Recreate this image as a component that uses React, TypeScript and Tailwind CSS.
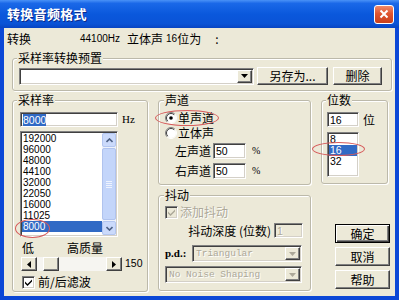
import React from "react";

const sunken =
  "border border-t-[#808080] border-l-[#808080] border-b-white border-r-white shadow-[inset_1px_1px_0_#404040,inset_-1px_-1px_0_#d4d0c8]";
const raised =
  "border border-t-white border-l-white border-b-[#404040] border-r-[#404040] shadow-[inset_-1px_-1px_0_#808080] bg-[#ece9d8]";
const group =
  "border border-[#bcb9aa] rounded-[3px] shadow-[inset_1px_1px_0_#fff,1px_1px_0_#fff]";
const legendCls = "px-[1px] leading-[14px] bg-[#ece9d8]";
const num = "font-['Liberation_Sans',sans-serif]";
const disabledText = "text-[#aca899] [text-shadow:1px_1px_0_#fff]";

function DownArrow({ color = "#000" }: { color?: string }) {
  return (
    <svg width="7" height="4" viewBox="0 0 7 4">
      <path d="M0 0h7L3.5 4z" fill={color} />
    </svg>
  );
}

function Combo({ cls, text, disabled }: { cls: string; text: string; disabled?: boolean }) {
  return (
    <div
      className={`${cls} h-[17px] flex items-stretch p-[1px] ${sunken} ${
        disabled ? "bg-[#ece9d8]" : "bg-white"
      }`}
    >
      <div
        className={`flex-1 pl-[2px] overflow-hidden whitespace-nowrap font-['Liberation_Mono',monospace] text-[9.5px] leading-[13px] ${
          disabled ? disabledText : ""
        }`}
      >
        {text}
      </div>
      <div className={`w-[15px] flex items-center justify-center ${raised}`}>
        <DownArrow color={disabled ? "#aca899" : "#000"} />
      </div>
    </div>
  );
}

function Edit({
  cls,
  text,
  disabled,
  selected,
}: {
  cls: string;
  text: string;
  disabled?: boolean;
  selected?: boolean;
}) {
  return (
    <div
      className={`${cls} ${sunken} ${
        disabled ? "bg-[#ece9d8]" : "bg-white"
      } px-[2px] flex items-center ${num} text-[10.5px] leading-[12px]`}
    >
      <span className={selected ? "bg-[#316ac5] text-white" : disabled ? disabledText : ""}>{text}</span>
    </div>
  );
}

function Radio({ checked }: { checked?: boolean }) {
  return (
    <svg width="12" height="12" viewBox="0 0 12 12">
      <circle cx="6" cy="6" r="5" fill="#fff" />
      <path d="M2.11 9.89A5.5 5.5 0 0 1 9.89 2.11" stroke="#808080" fill="none" />
      <path d="M9.89 2.11A5.5 5.5 0 0 1 2.11 9.89" stroke="#fff" fill="none" />
      <path d="M2.8 9.2A4.5 4.5 0 0 1 9.2 2.8" stroke="#404040" fill="none" />
      {checked && <circle cx="6" cy="6" r="1.8" fill="#000" />}
    </svg>
  );
}

function Check({ disabled }: { disabled?: boolean }) {
  return (
    <div
      className={`w-[13px] h-[13px] shrink-0 ${sunken} ${
        disabled ? "bg-[#ece9d8]" : "bg-white"
      } flex items-center justify-center`}
    >
      <svg width="7" height="7" viewBox="0 0 7 7">
        <path d="M0 2.5l2.5 2.5L7 0.5v2L2.5 7L0 4.5z" fill={disabled ? "#aca899" : "#000"} />
      </svg>
    </div>
  );
}

function Chevron({ up }: { up?: boolean }) {
  return (
    <svg width="7" height="5" viewBox="0 0 7 5">
      <path
        d={up ? "M0.5 4L3.5 1L6.5 4" : "M0.5 1L3.5 4L6.5 1"}
        stroke="#4d6185"
        strokeWidth="1.6"
        fill="none"
      />
    </svg>
  );
}

function VScroll() {
  return (
    <div className="w-[14px] h-full flex flex-col bg-[#eef2fb]">
      <div className="h-[14px] rounded-[2px] border border-[#b3c6f0] bg-[#cbdafb] flex items-center justify-center">
        <Chevron up />
      </div>
      <div className="flex-1 my-[1px] rounded-[2px] border border-[#b0c3ee] bg-[#c3d5fa] flex items-center justify-center">
        <div className="flex flex-col gap-[1px]">
          <div className="w-[6px] h-[1px] bg-[#eef3fe]" />
          <div className="w-[6px] h-[1px] bg-[#eef3fe]" />
          <div className="w-[6px] h-[1px] bg-[#eef3fe]" />
          <div className="w-[6px] h-[1px] bg-[#eef3fe]" />
        </div>
      </div>
      <div className="h-[14px] rounded-[2px] border border-[#b3c6f0] bg-[#cbdafb] flex items-center justify-center">
        <Chevron />
      </div>
    </div>
  );
}

function RateList() {
  const items = ["192000", "96000", "48000", "44100", "32000", "22050", "16000", "11025", "8000"];
  return (
    <div className="relative mt-[4px] w-[98px] h-[106px]">
      <div className={`w-full h-full flex bg-white p-[1px] ${sunken}`}>
        <div className={`flex-1 overflow-hidden ${num} text-[10px] leading-[11px]`}>
          {items.map((i) => (
            <div key={i} className={i === "8000" ? "bg-[#316ac5] text-white pl-[1px]" : "pl-[1px]"}>
              {i}
            </div>
          ))}
        </div>
        <VScroll />
      </div>
      <div className="absolute left-[-5px] top-[88px] w-[35px] h-[19px] rounded-[50%] border border-[#d65a5a]" />
    </div>
  );
}

function Slider() {
  return (
    <div className="mt-[2px] ml-[1px] flex items-center h-[14px]">
      <div className="w-[101px] h-[14px] flex">
        <div className={`w-[16px] h-full flex items-center justify-center ${raised}`}>
          <svg width="4" height="7" viewBox="0 0 4 7">
            <path d="M4 0v7L0 3.5z" fill="#000" />
          </svg>
        </div>
        <div className="flex-1 bg-[#f6f5f1]">
          <div className={`ml-[6px] w-[16px] h-full ${raised}`} />
        </div>
        <div className={`w-[16px] h-full flex items-center justify-center ${raised}`}>
          <svg width="4" height="7" viewBox="0 0 4 7">
            <path d="M0 0v7L4 3.5z" fill="#000" />
          </svg>
        </div>
      </div>
      <span className={`ml-[3px] ${num} text-[10.5px]`}>150</span>
    </div>
  );
}

function Button({ label, def, cls }: { label: string; def?: boolean; cls: string }) {
  return (
    <div
      className={`${cls} flex items-center justify-center leading-[14px] bg-[#ece9d8] ${
        def
          ? "border border-black shadow-[inset_1px_1px_0_#fff,inset_-1px_-1px_0_#404040,inset_-2px_-2px_0_#808080]"
          : raised
      }`}
    >
      {label}
    </div>
  );
}

export default function App() {
  return (
    <div className="w-[399px] h-[300px] flex flex-col bg-[#0b47d6] font-['Noto_Sans_CJK_SC',sans-serif] text-[12px] text-black overflow-hidden">
      {/* title bar */}
      <div className="h-[28px] shrink-0 flex items-center pl-[7px] pr-[5px] bg-[linear-gradient(180deg,#4a92f7_0%,#1a68e8_12%,#0a58dc_50%,#0a53d6_85%,#0844c2_100%)]">
        <span className="text-white font-bold text-[13px] leading-[16px] tracking-[0.3px] [text-shadow:1px_1px_0_#0a2a8a]">
          转换音频格式
        </span>
        <div className="ml-auto w-[20px] h-[19px] rounded-[3px] border border-white bg-[linear-gradient(180deg,#f08a6a_0%,#e0552f_45%,#c8401c_100%)] flex items-center justify-center">
          <svg width="10" height="10" viewBox="0 0 10 10">
            <path d="M1.5 1.5L8.5 8.5M8.5 1.5L1.5 8.5" stroke="#fff" strokeWidth="2" />
          </svg>
        </div>
      </div>

      {/* body */}
      <div className="flex-1 mx-[4px] mb-[4px] bg-[#ece9d8] pl-[8px] flex flex-col">
        {/* info row */}
        <div className="mt-[4px] -ml-[5px] flex h-[14px] leading-[14px] whitespace-nowrap">
          <span className="w-[73px]">转换</span>
          <span className={`${num} text-[10px]`}>44100Hz</span>
          <span className="ml-[7px]">立体声</span>
          <span className={`ml-[3px] ${num} text-[10px]`}>16</span>
          <span>位为</span>
          <span className="ml-[14px]">:</span>
        </div>

        {/* preset group */}
        <fieldset className={`mt-[5px] w-[380px] h-[40px] ${group} pl-[6px] pt-[2px]`}>
          <legend className={`${legendCls} -ml-[2px]`}>采样率转换预置</legend>
          <div className="flex items-center h-[18px]">
            <Combo cls="w-[235px]" text="" />
            <Button cls="ml-[3px] w-[71px] h-[18px]" label="另存为..." />
            <Button cls="ml-[5px] w-[49px] h-[18px]" label="删除" />
          </div>
        </fieldset>

        {/* bottom row */}
        <div className="mt-[2px] flex items-start">
          {/* sample rate */}
          <fieldset className={`w-[136px] h-[199px] ${group} pl-[7px] pt-[5px]`}>
            <legend className={`${legendCls} -ml-[3px]`}>采样率</legend>
            <div className="flex items-center h-[15px]">
              <Edit cls="w-[98px] h-[15px]" text="8000" selected />
              <span className="ml-[4px] font-['Liberation_Serif',serif] text-[11px]">Hz</span>
            </div>
            <RateList />
            <div className="mt-[4px] h-[14px] flex leading-[14px] pl-[2px]">
              <span>低</span>
              <span className="ml-[33px]">高质量</span>
            </div>
            <Slider />
            <div className="mt-[4px] h-[14px] flex items-center pl-[2px] leading-[14px]">
              <Check />
              <span className="ml-[3px]">前/后滤波</span>
            </div>
          </fieldset>

          {/* middle column */}
          <div className="ml-[10px] w-[153px] flex flex-col">
            <fieldset className={`h-[92px] ${group} pl-[6px] pt-[4px]`}>
              <legend className={`${legendCls} -ml-[1px]`}>声道</legend>
              <div className="relative h-[14px] flex items-center leading-[14px]">
                <Radio checked />
                <span className="ml-[1px]">单声道</span>
                <div className="absolute left-[-10px] top-[-1px] w-[64px] h-[16px] rounded-[50%] border border-[#d65a5a]" />
              </div>
              <div className="mt-[1px] h-[14px] flex items-center leading-[14px]">
                <Radio />
                <span className="ml-[1px]">立体声</span>
              </div>
              <div className="mt-[3px] h-[16px] flex items-center pl-[10px] leading-[14px]">
                <span>左声道</span>
                <Edit cls="ml-[2px] w-[33px] h-[16px]" text="50" />
                <span className="ml-[6px] font-['Liberation_Serif',serif] text-[10px]">%</span>
              </div>
              <div className="mt-[4px] h-[16px] flex items-center pl-[10px] leading-[14px]">
                <span>右声道</span>
                <Edit cls="ml-[2px] w-[33px] h-[16px]" text="50" />
                <span className="ml-[6px] font-['Liberation_Serif',serif] text-[10px]">%</span>
              </div>
            </fieldset>

            <fieldset className={`mt-[3px] h-[103px] ${group} pl-[6px] pr-[7px] pt-[3px]`}>
              <legend className={`${legendCls} -ml-[1px]`}>抖动</legend>
              <div className="h-[14px] flex items-center leading-[14px]">
                <Check disabled />
                <span className={`ml-[2px] ${disabledText}`}>添加抖动</span>
              </div>
              <div className="mt-[4px] h-[15px] flex items-center justify-end leading-[14px]">
                <span>抖动深度 (位数)</span>
                <Edit cls="ml-[3px] w-[29px] h-[15px]" text="1" disabled />
              </div>
              <div className="mt-[7px] h-[17px] flex items-center">
                <span className="w-[27px] font-['Liberation_Serif',serif] font-bold text-[11px]">p.d.:</span>
                <Combo cls="w-[110px]" text="Triangular" disabled />
              </div>
              <div className="mt-[4px] h-[17px] flex items-center">
                <Combo cls="w-[137px]" text="No Noise Shaping" disabled />
              </div>
            </fieldset>
          </div>

          {/* right column */}
          <div className="ml-[10px] w-[70px] flex flex-col">
            <fieldset className={`w-[67px] h-[91px] ${group} pl-[5px] pt-[5px]`}>
              <legend className={`${legendCls} -ml-[1px]`}>位数</legend>
              <div className="h-[15px] flex items-center">
                <Edit cls="w-[32px] h-[15px]" text="16" />
                <span className="ml-[4px]">位</span>
              </div>
              <div className="relative mt-[5px] w-[32px] h-[45px]">
                <div className={`w-full h-full bg-white p-[1px] ${sunken} ${num} text-[10.5px] leading-[11px]`}>
                  <div className="pl-[1px]">8</div>
                  <div className="pl-[1px] bg-[#316ac5] text-white">16</div>
                  <div className="pl-[1px]">32</div>
                </div>
                <div className="absolute left-[-15px] top-[10px] w-[53px] h-[14px] rounded-[50%] border border-[#d65a5a]" />
              </div>
            </fieldset>
            <Button cls="mt-[40px] ml-[14px] w-[55px] h-[19px]" label="确定" def />
            <Button cls="mt-[4px] ml-[14px] w-[55px] h-[19px]" label="取消" />
            <Button cls="mt-[4px] ml-[14px] w-[55px] h-[19px]" label="帮助" />
          </div>
        </div>
      </div>
    </div>
  );
}
